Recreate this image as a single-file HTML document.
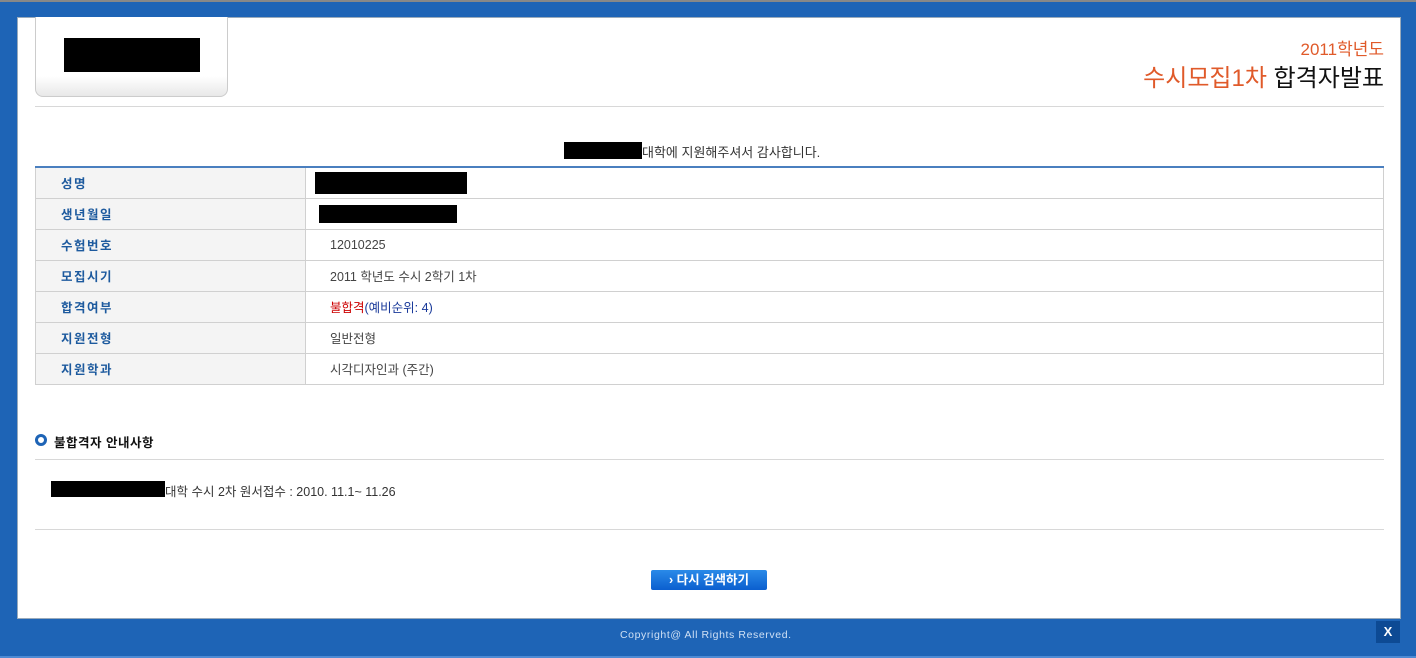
<!DOCTYPE html>
<html><head><meta charset="utf-8"><style>
*{margin:0;padding:0;box-sizing:border-box}
body{width:1416px;height:658px;background:#1e64b6;position:relative;overflow:hidden;font-family:"Liberation Sans","Noto Sans CJK KR","NanumGothic",sans-serif;font-size:12px;color:#333}
.a{position:absolute}
.k{background:#000}
table{border-collapse:collapse;position:absolute;left:35px;top:166px;width:1349px;border-top:2px solid #4a7fbf}
td{height:31px;border:1px solid #d0d0d0;font-size:12.5px}
td.l{width:270px;background:#f4f4f4;color:#1d5a9e;font-weight:bold;padding-left:25px;letter-spacing:1.5px}
td.v{padding-left:24px;color:#444}
</style></head><body>
<div class="a" style="left:0;top:0;width:1416px;height:2px;background:#888"></div>
<div class="a" style="left:17px;top:17px;width:1384px;height:602px;background:#fff;border:1px solid #9ab"></div>
<div class="a" style="left:35px;top:17px;width:193px;height:80px;border:1px solid #ccc;border-top:none;border-radius:0 0 8px 8px;background:linear-gradient(#fff 75%,#e8e8e8)"></div>
<div class="a k" style="left:64px;top:38px;width:136px;height:34px"></div>
<div class="a" style="right:32px;top:35px;color:#e05a2a;font-size:17px">2011학년도</div>
<div class="a" style="right:32px;top:58px;font-size:24px;color:#111"><span style="color:#e05a2a">수시모집1차</span> 합격자발표</div>
<div class="a" style="left:35px;top:106px;width:1349px;height:1px;background:#d8d8d8"></div>
<div class="a k" style="left:564px;top:142px;width:78px;height:17px"></div>
<div class="a" style="left:642px;top:142px;color:#333;font-size:13px">대학에 지원해주셔서 감사합니다.</div>
<table>
<tr><td class="l">성명</td><td class="v"><div class="k" style="width:152px;height:22px;margin-left:-15px"></div></td></tr>
<tr><td class="l">생년월일</td><td class="v"><div class="k" style="width:138px;height:18px;margin-left:-11px"></div></td></tr>
<tr><td class="l">수험번호</td><td class="v">12010225</td></tr>
<tr><td class="l">모집시기</td><td class="v">2011 학년도 수시 2학기 1차</td></tr>
<tr><td class="l">합격여부</td><td class="v"><span style="color:#c00">불합격</span><span style="color:#1a3a9a">(예비순위: 4)</span></td></tr>
<tr><td class="l">지원전형</td><td class="v">일반전형</td></tr>
<tr><td class="l">지원학과</td><td class="v">시각디자인과 (주간)</td></tr>
</table>
<div class="a" style="left:35px;top:434px;width:12px;height:12px;border-radius:50%;border:3px solid #1e64b6;background:#fff"></div>
<div class="a" style="left:54px;top:432px;font-weight:bold;color:#111;font-size:12.5px;letter-spacing:0.5px">불합격자 안내사항</div>
<div class="a" style="left:35px;top:459px;width:1349px;height:1px;background:#d8d8d8"></div>
<div class="a k" style="left:51px;top:481px;width:114px;height:16px"></div>
<div class="a" style="left:165px;top:481px;color:#333;font-size:12.5px">대학 수시 2차 원서접수 : 2010. 11.1~ 11.26</div>
<div class="a" style="left:35px;top:529px;width:1349px;height:1px;background:#d8d8d8"></div>
<div class="a" style="left:651px;top:570px;width:116px;height:20px;background:linear-gradient(#2a8ae8,#0b5fcf);border-radius:2px;color:#fff;font-weight:bold;font-size:12.5px;text-align:center;line-height:20px">› 다시 검색하기</div>
<div class="a" style="left:620px;top:629px;color:#cfe0f4;font-size:10.5px;letter-spacing:0.6px">Copyright@ All Rights Reserved.</div>
<div class="a" style="left:1376px;top:621px;width:24px;height:22px;background:#0d4a94;color:#fff;font-weight:bold;font-size:13px;text-align:center;line-height:22px">X</div>
<div class="a" style="left:0;top:656px;width:1416px;height:2px;background:#4d8ad4"></div>
</body></html>
